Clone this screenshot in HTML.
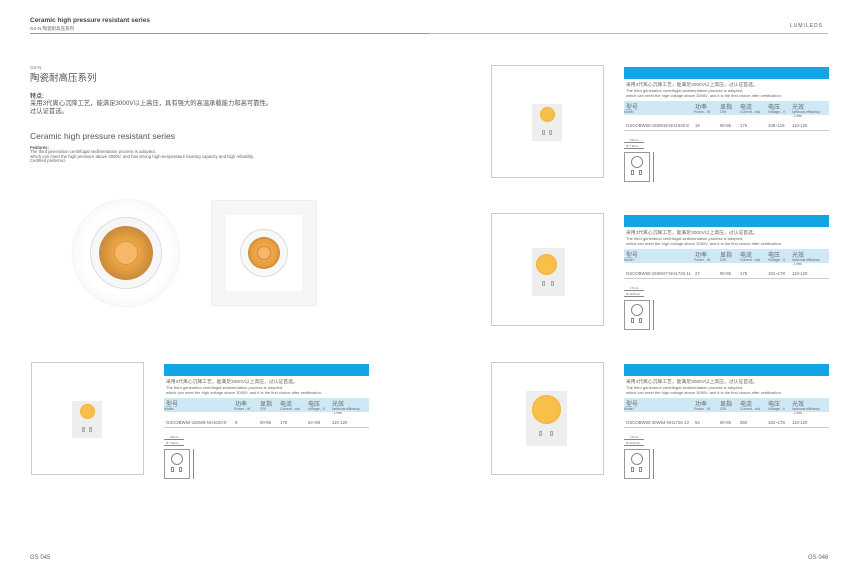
<!DOCTYPE html>
<html><head><meta charset="utf-8"><style>
*{margin:0;padding:0;box-sizing:border-box}
body{width:859px;height:583px;background:#fff;position:relative;overflow:hidden;font-family:"Liberation Sans","Noto Sans CJK SC",sans-serif;color:#555}
.a{position:absolute;white-space:nowrap}
.box{position:absolute;width:113px;height:113px;border:1px solid #ccc;background:#fff}
.chip{position:absolute;background:#eeeeec}
.led{position:absolute;border-radius:50%;background:#f8c04a;box-shadow:inset 0 0 2px #e6a23a}
.pad{position:absolute;width:3px;height:5px;border:1px solid #aaa;background:#ddd}
.card{position:absolute;width:205px;height:120px}
.bar{position:absolute;left:0;top:0;width:205px;height:12px;background:#13a4e6}
.hd{position:absolute;left:0;top:34px;width:205px;height:14px;background:#cfe8f6}
.t{position:absolute;white-space:nowrap;font-size:4px;color:#666}
.cn{font-size:6px;color:#666}
</style></head><body>

<div class="a" style="left:30px;top:17px;font-size:6.5px;font-weight:bold;color:#444">Ceramic high pressure resistant series</div>
<div class="a" style="left:30px;top:26px;font-size:4.5px;color:#666">GS-N 陶瓷耐高压系列</div>
<div class="a" style="left:30px;top:33px;width:399px;height:1px;background:#999"></div>
<div class="a" style="left:429px;top:33px;width:399px;height:1px;background:#bbb"></div>
<div class="a" style="left:790px;top:23px;font-size:5px;letter-spacing:1px;color:#555">LUMILEDS</div>

<div class="a" style="left:30px;top:65px;font-size:4.5px;color:#777">GS-N</div>
<div class="a" style="left:30px;top:70px;font-size:9.5px;color:#555">陶瓷耐高压系列</div>
<div class="a" style="left:30px;top:91px;font-size:6px;font-weight:bold;color:#555">特点:</div>
<div class="a" style="left:30px;top:98px;font-size:6.3px;color:#555">采用3代离心沉降工艺，能满足3000V以上高压，具有强大的高温承载能力和高可靠性。</div>
<div class="a" style="left:30px;top:106px;font-size:6.3px;color:#555">过认证首选。</div>
<div class="a" style="left:30px;top:131px;font-size:8.5px;color:#555">Ceramic high pressure resistant series</div>
<div class="a" style="left:30px;top:145px;font-size:4.2px;font-weight:bold;color:#555">Features:</div>
<div class="a" style="left:30px;top:150px;font-size:4.3px;line-height:4.5px;color:#666">The third generation centrifugal sedimentation process is adopted,<br>which can meet the high pressure above 3000V, and has strong high-temperature bearing capacity and high reliability.<br>Certified preferred.</div>

<div class="a" style="left:73px;top:200px;width:106px;height:106px;border-radius:50%;background:radial-gradient(circle,#fff 55%,#f0f0f0 100%);box-shadow:0 0 2px #ddd"></div>
<div class="a" style="left:90px;top:217px;width:72px;height:72px;border-radius:50%;border:1px solid #ddd;background:#f7f7f7"></div>
<div class="a" style="left:99px;top:226px;width:54px;height:54px;border-radius:50%;background:radial-gradient(circle,#f3b565 0%,#e8a040 40%,#c98a3c 70%,#999 90%)"></div>
<div class="a" style="left:114px;top:241px;width:24px;height:24px;border-radius:50%;background:#f6b868;border:1px solid #d99845"></div>
<div class="a" style="left:211px;top:200px;width:106px;height:106px;background:#f6f6f6;border:1px solid #eee"></div>
<div class="a" style="left:226px;top:215px;width:76px;height:76px;background:#fff"></div>
<div class="a" style="left:240px;top:229px;width:48px;height:48px;border-radius:50%;border:1px solid #ddd;background:#f8f8f8"></div>
<div class="a" style="left:248px;top:237px;width:32px;height:32px;border-radius:50%;background:radial-gradient(circle,#f3b565 0%,#e89b3a 60%,#555 100%)"></div>
<div class="a" style="left:257px;top:246px;width:14px;height:14px;border-radius:50%;background:#f6b868;border:1px solid #c98a3c"></div>

<div class="box" style="left:491px;top:65px"><div class="chip" style="left:40px;top:38px;width:30px;height:37px"><div class="led" style="left:8px;top:3px;width:15px;height:15px"></div><div class="pad" style="left:10px;top:26px"></div><div class="pad" style="left:17px;top:26px"></div></div></div>
<div class="box" style="left:491px;top:213px"><div class="chip" style="left:40px;top:34px;width:33px;height:48px"><div class="led" style="left:4px;top:6px;width:21px;height:21px"></div><div class="pad" style="left:10px;top:33px"></div><div class="pad" style="left:19px;top:33px"></div></div></div>
<div class="box" style="left:491px;top:362px"><div class="chip" style="left:34px;top:28px;width:41px;height:55px"><div class="led" style="left:6px;top:4px;width:29px;height:29px"></div><div class="pad" style="left:13px;top:40px"></div><div class="pad" style="left:24px;top:40px"></div></div></div>
<div class="box" style="left:31px;top:362px"><div class="chip" style="left:40px;top:38px;width:30px;height:37px"><div class="led" style="left:8px;top:3px;width:15px;height:15px"></div><div class="pad" style="left:10px;top:26px"></div><div class="pad" style="left:17px;top:26px"></div></div></div>

<div class="card" style="left:624px;top:67px">
<div class="bar"></div>
<div class="t cn" style="left:2px;top:14px;font-size:4.8px">采用3代离心沉降工艺，能满足3000V以上高压，过认证首选。</div>
<div class="t" style="left:2px;top:21px">The third generation centrifugal sedimentation process is adopted,</div>
<div class="t" style="left:2px;top:25.5px">which can meet the high voltage above 3000V, and it is the first choice after certification.</div>
<div class="hd"></div>
<div class="t cn" style="left:2px;top:35px">型号</div><div class="t" style="left:0px;top:43px;font-size:3.5px">Model</div>
<div class="t cn" style="left:71px;top:35px">功率</div><div class="t" style="left:70px;top:43px;font-size:3.5px">Power - W</div>
<div class="t cn" style="left:96px;top:35px">显指</div><div class="t" style="left:96px;top:43px;font-size:3.5px">CRI</div>
<div class="t cn" style="left:116px;top:35px">电流</div><div class="t" style="left:116px;top:43px;font-size:3.5px">Current - mA</div>
<div class="t cn" style="left:144px;top:35px">电压</div><div class="t" style="left:144px;top:43px;font-size:3.5px">Voltage - V</div>
<div class="t cn" style="left:168px;top:35px">光效</div><div class="t" style="left:168px;top:43px;font-size:3.3px">luminous efficiency<br>- L/mw</div>
<div class="t" style="left:2px;top:56px;font-size:4.3px">GSCOBW60-150W18-NH1620-8</div>
<div class="t" style="left:71px;top:56px;font-size:4.3px">18</div><div class="t" style="left:96px;top:56px;font-size:4.3px">90-95</div><div class="t" style="left:116px;top:56px;font-size:4.3px">175</div><div class="t" style="left:144px;top:56px;font-size:4.3px">108~119</div><div class="t" style="left:168px;top:56px;font-size:4.3px">110-120</div>
<div class="a" style="left:0;top:63px;width:205px;height:1px;background:#ccc"></div>
<div class="t" style="left:6px;top:71px;font-size:3px">16mm</div><div class="a" style="left:0;top:75px;width:20px;height:1px;background:#888"></div>
<div class="t" style="left:2px;top:77px;font-size:3px">Φ 7.9mm</div><div class="a" style="left:0;top:81px;width:20px;height:1px;background:#888"></div>
<div class="a" style="left:0;top:85px;width:26px;height:30px;border:1px solid #999"></div>
<div class="a" style="left:7px;top:89px;width:12px;height:12px;border:1.5px solid #888;border-radius:50%"></div>
<div class="a" style="left:7px;top:103px;width:3px;height:5px;border:1px solid #888"></div><div class="a" style="left:15px;top:103px;width:3px;height:5px;border:1px solid #888"></div>
<div class="a" style="left:29px;top:85px;width:1px;height:30px;background:#888"></div>
</div>

<div class="card" style="left:624px;top:215px">
<div class="bar"></div>
<div class="t cn" style="left:2px;top:14px;font-size:4.8px">采用3代离心沉降工艺，能满足3000V以上高压，过认证首选。</div>
<div class="t" style="left:2px;top:21px">The third generation centrifugal sedimentation process is adopted,</div>
<div class="t" style="left:2px;top:25.5px">which can meet the high voltage above 3000V, and it is the first choice after certification.</div>
<div class="hd"></div>
<div class="t cn" style="left:2px;top:35px">型号</div><div class="t" style="left:0px;top:43px;font-size:3.5px">Model</div>
<div class="t cn" style="left:71px;top:35px">功率</div><div class="t" style="left:70px;top:43px;font-size:3.5px">Power - W</div>
<div class="t cn" style="left:96px;top:35px">显指</div><div class="t" style="left:96px;top:43px;font-size:3.5px">CRI</div>
<div class="t cn" style="left:116px;top:35px">电流</div><div class="t" style="left:116px;top:43px;font-size:3.5px">Current - mA</div>
<div class="t cn" style="left:144px;top:35px">电压</div><div class="t" style="left:144px;top:43px;font-size:3.5px">Voltage - V</div>
<div class="t cn" style="left:168px;top:35px">光效</div><div class="t" style="left:168px;top:43px;font-size:3.3px">luminous efficiency<br>- L/mw</div>
<div class="t" style="left:2px;top:56px;font-size:4.3px">GSCOBW60-150W27-NH1726-11</div>
<div class="t" style="left:71px;top:56px;font-size:4.3px">27</div><div class="t" style="left:96px;top:56px;font-size:4.3px">90-95</div><div class="t" style="left:116px;top:56px;font-size:4.3px">175</div><div class="t" style="left:144px;top:56px;font-size:4.3px">162~178</div><div class="t" style="left:168px;top:56px;font-size:4.3px">110-120</div>
<div class="a" style="left:0;top:63px;width:205px;height:1px;background:#ccc"></div>
<div class="t" style="left:6px;top:71px;font-size:3px">17mm</div><div class="a" style="left:0;top:75px;width:20px;height:1px;background:#888"></div>
<div class="t" style="left:2px;top:77px;font-size:3px">Φ 10.5mm</div><div class="a" style="left:0;top:81px;width:20px;height:1px;background:#888"></div>
<div class="a" style="left:0;top:85px;width:26px;height:30px;border:1px solid #999"></div>
<div class="a" style="left:7px;top:89px;width:12px;height:12px;border:1.5px solid #888;border-radius:50%"></div>
<div class="a" style="left:7px;top:103px;width:3px;height:5px;border:1px solid #888"></div><div class="a" style="left:15px;top:103px;width:3px;height:5px;border:1px solid #888"></div>
<div class="a" style="left:29px;top:85px;width:1px;height:30px;background:#888"></div>
</div>

<div class="card" style="left:624px;top:364px">
<div class="bar"></div>
<div class="t cn" style="left:2px;top:14px;font-size:4.8px">采用3代离心沉降工艺，能满足3000V以上高压，过认证首选。</div>
<div class="t" style="left:2px;top:21px">The third generation centrifugal sedimentation process is adopted,</div>
<div class="t" style="left:2px;top:25.5px">which can meet the high voltage above 3000V, and it is the first choice after certification.</div>
<div class="hd"></div>
<div class="t cn" style="left:2px;top:35px">型号</div><div class="t" style="left:0px;top:43px;font-size:3.5px">Model</div>
<div class="t cn" style="left:71px;top:35px">功率</div><div class="t" style="left:70px;top:43px;font-size:3.5px">Power - W</div>
<div class="t cn" style="left:96px;top:35px">显指</div><div class="t" style="left:96px;top:43px;font-size:3.5px">CRI</div>
<div class="t cn" style="left:116px;top:35px">电流</div><div class="t" style="left:116px;top:43px;font-size:3.5px">Current - mA</div>
<div class="t cn" style="left:144px;top:35px">电压</div><div class="t" style="left:144px;top:43px;font-size:3.5px">Voltage - V</div>
<div class="t cn" style="left:168px;top:35px">光效</div><div class="t" style="left:168px;top:43px;font-size:3.3px">luminous efficiency<br>- L/mw</div>
<div class="t" style="left:2px;top:56px;font-size:4.3px">GSCOBW60-30W54-NH1726-13</div>
<div class="t" style="left:71px;top:56px;font-size:4.3px">54</div><div class="t" style="left:96px;top:56px;font-size:4.3px">90-95</div><div class="t" style="left:116px;top:56px;font-size:4.3px">350</div><div class="t" style="left:144px;top:56px;font-size:4.3px">162~178</div><div class="t" style="left:168px;top:56px;font-size:4.3px">110-120</div>
<div class="a" style="left:0;top:63px;width:205px;height:1px;background:#ccc"></div>
<div class="t" style="left:6px;top:71px;font-size:3px">17mm</div><div class="a" style="left:0;top:75px;width:20px;height:1px;background:#888"></div>
<div class="t" style="left:2px;top:77px;font-size:3px">Φ 13.6mm</div><div class="a" style="left:0;top:81px;width:20px;height:1px;background:#888"></div>
<div class="a" style="left:0;top:85px;width:26px;height:30px;border:1px solid #999"></div>
<div class="a" style="left:7px;top:89px;width:12px;height:12px;border:1.5px solid #888;border-radius:50%"></div>
<div class="a" style="left:7px;top:103px;width:3px;height:5px;border:1px solid #888"></div><div class="a" style="left:15px;top:103px;width:3px;height:5px;border:1px solid #888"></div>
<div class="a" style="left:29px;top:85px;width:1px;height:30px;background:#888"></div>
</div>

<div class="card" style="left:164px;top:364px">
<div class="bar"></div>
<div class="t cn" style="left:2px;top:14px;font-size:4.8px">采用3代离心沉降工艺，能满足3000V以上高压，过认证首选。</div>
<div class="t" style="left:2px;top:21px">The third generation centrifugal sedimentation process is adopted,</div>
<div class="t" style="left:2px;top:25.5px">which can meet the high voltage above 3000V, and it is the first choice after certification.</div>
<div class="hd"></div>
<div class="t cn" style="left:2px;top:35px">型号</div><div class="t" style="left:0px;top:43px;font-size:3.5px">Model</div>
<div class="t cn" style="left:71px;top:35px">功率</div><div class="t" style="left:70px;top:43px;font-size:3.5px">Power - W</div>
<div class="t cn" style="left:96px;top:35px">显指</div><div class="t" style="left:96px;top:43px;font-size:3.5px">CRI</div>
<div class="t cn" style="left:116px;top:35px">电流</div><div class="t" style="left:116px;top:43px;font-size:3.5px">Current - mA</div>
<div class="t cn" style="left:144px;top:35px">电压</div><div class="t" style="left:144px;top:43px;font-size:3.5px">Voltage - V</div>
<div class="t cn" style="left:168px;top:35px">光效</div><div class="t" style="left:168px;top:43px;font-size:3.3px">luminous efficiency<br>- L/mw</div>
<div class="t" style="left:2px;top:56px;font-size:4.3px">GSCOBW60-150W9-NH1620-8</div>
<div class="t" style="left:71px;top:56px;font-size:4.3px">9</div><div class="t" style="left:96px;top:56px;font-size:4.3px">90-95</div><div class="t" style="left:116px;top:56px;font-size:4.3px">175</div><div class="t" style="left:144px;top:56px;font-size:4.3px">54~59</div><div class="t" style="left:168px;top:56px;font-size:4.3px">110-120</div>
<div class="a" style="left:0;top:63px;width:205px;height:1px;background:#ccc"></div>
<div class="t" style="left:6px;top:71px;font-size:3px">16mm</div><div class="a" style="left:0;top:75px;width:20px;height:1px;background:#888"></div>
<div class="t" style="left:2px;top:77px;font-size:3px">Φ 7.9mm</div><div class="a" style="left:0;top:81px;width:20px;height:1px;background:#888"></div>
<div class="a" style="left:0;top:85px;width:26px;height:30px;border:1px solid #999"></div>
<div class="a" style="left:7px;top:89px;width:12px;height:12px;border:1.5px solid #888;border-radius:50%"></div>
<div class="a" style="left:7px;top:103px;width:3px;height:5px;border:1px solid #888"></div><div class="a" style="left:15px;top:103px;width:3px;height:5px;border:1px solid #888"></div>
<div class="a" style="left:29px;top:85px;width:1px;height:30px;background:#888"></div>
</div>

<div class="a" style="left:30px;top:555px;font-size:6px;color:#666">GS 045</div>
<div class="a" style="left:808px;top:555px;font-size:6px;color:#666">GS 046</div>
</body></html>
